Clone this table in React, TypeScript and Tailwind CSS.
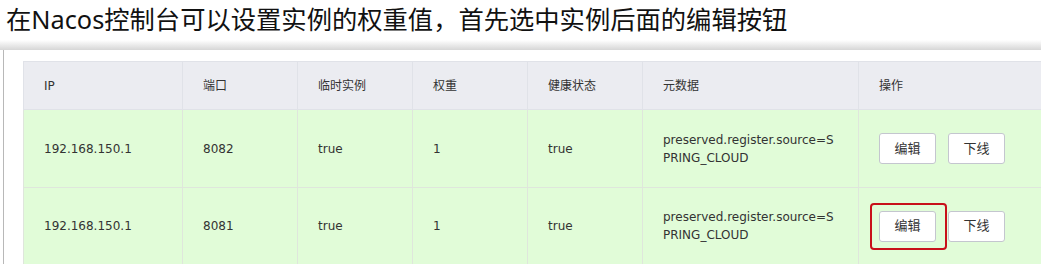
import React from "react";

type Instance = {
  ip: string;
  port: string;
  ephemeral: string;
  weight: string;
  healthy: string;
  metadata: string;
  active?: boolean;
};

const instances: Instance[] = [
  {
    ip: "192.168.150.1",
    port: "8082",
    ephemeral: "true",
    weight: "1",
    healthy: "true",
    metadata: "preserved.register.source=SPRING_CLOUD",
  },
  {
    ip: "192.168.150.1",
    port: "8081",
    ephemeral: "true",
    weight: "1",
    healthy: "true",
    metadata: "preserved.register.source=SPRING_CLOUD",
    active: true,
  },
];

const headers = ["IP", "端口", "临时实例", "权重", "健康状态", "元数据", "操作"];
const colWidths = ["w-[159px]", "w-[115px]", "w-[115px]", "w-[115px]", "w-[115px]", "w-[216px]", "w-[200px]"];

function ActionButton({ label }: { label: string }) {
  return (
    <button className="w-[57px] h-[31px] bg-white border border-[#c4c6cf] rounded-[3px] text-[13px] text-[#333]">
      {label}
    </button>
  );
}

function App() {
  return (
    <div
      className="w-[1041px] h-[264px] overflow-hidden bg-white flex flex-col"
      style={{ fontFamily: '"DejaVu Sans", "Noto Sans CJK SC", sans-serif' }}
    >
      {/* Slide caption */}
      <div
        className="h-[40px] pl-[6px] text-[25.3px] leading-[38px] text-[#111] shrink-0"
        style={{ fontFamily: '"Noto Sans", "Noto Sans CJK SC", sans-serif' }}
      >
        在Nacos控制台可以设置实例的权重值，首先选中实例后面的编辑按钮
      </div>

      {/* Console panel */}
      <div className="h-[10px] shrink-0 bg-gradient-to-b from-white to-[#d6d6d6]" />
      <div className="flex-1 ml-[3px] border-l border-[#b8b8b8] bg-white pl-[19px] pt-[11px] overflow-hidden">
        <table className="table-fixed border-collapse w-[1035px] text-[12px] text-[#333]">
          <colgroup>
            {colWidths.map((w, i) => (
              <col key={i} className={w} />
            ))}
          </colgroup>
          <thead>
            <tr className="bg-[#ebecf1] h-[48px]">
              {headers.map((h) => (
                <th key={h} className="text-left font-normal px-[20px] border border-[#e0e2e8]">
                  {h}
                </th>
              ))}
            </tr>
          </thead>
          <tbody>
            {instances.map((row, idx) => (
              <tr key={row.port} className={`bg-[#e1fcd8] ${idx === 0 ? "h-[78px]" : "h-[77px]"}`}>
                <td className="px-[20px] border border-[#dfe6dc]">{row.ip}</td>
                <td className="px-[20px] border border-[#dfe6dc]">{row.port}</td>
                <td className="px-[20px] border border-[#dfe6dc]">{row.ephemeral}</td>
                <td className="px-[20px] border border-[#dfe6dc]">{row.weight}</td>
                <td className="px-[20px] border border-[#dfe6dc]">{row.healthy}</td>
                <td className="px-[20px] border border-[#dfe6dc] break-all leading-[18px]">{row.metadata}</td>
                <td className="px-[20px] border border-[#dfe6dc]">
                  <div className="flex items-center gap-[12px]">
                    <div className="relative">
                      <ActionButton label="编辑" />
                      {row.active && (
                        <div className="absolute -left-[9px] -right-[11px] -top-[8px] -bottom-[8px] border-2 border-[#c8101a] rounded-[4px]" />
                      )}
                    </div>
                    <ActionButton label="下线" />
                  </div>
                </td>
              </tr>
            ))}
          </tbody>
        </table>
      </div>
    </div>
  );
}

export default App;
